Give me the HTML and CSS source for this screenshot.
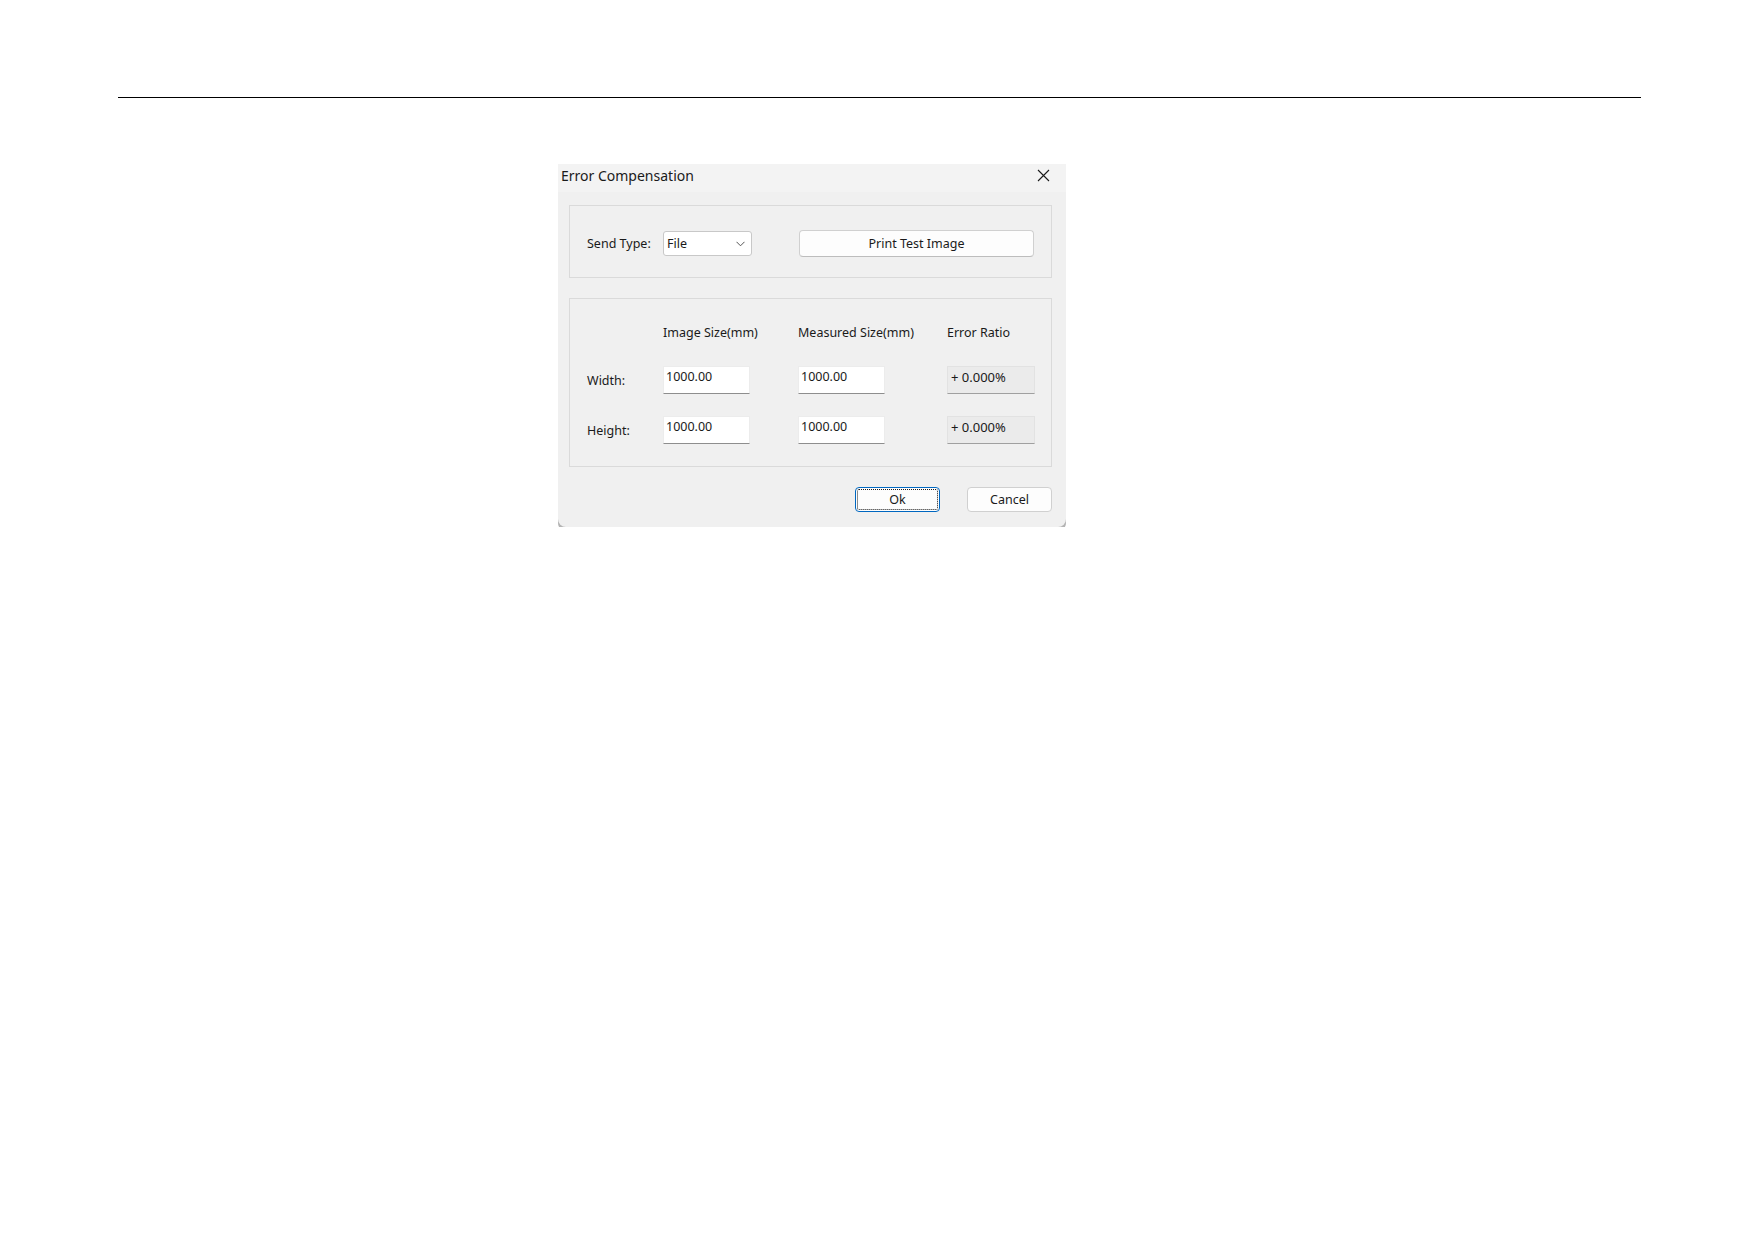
FILE: index.html
```html
<!DOCTYPE html>
<html lang="en">
<head>
    <meta charset="UTF-8">
    <title>Error Compensation</title>
    <link rel="stylesheet" href="styles.css">
</head>
<body>
    <div class="page-rule"></div>

    <div class="dialog">
        <div class="title-bar">
            <span class="title">Error Compensation</span>
            <svg class="close" width="13" height="13" viewBox="0 0 13 13">
                <path d="M1 1 L12 12 M12 1 L1 12" stroke="#1a1a1a" stroke-width="1.1" fill="none"/>
            </svg>
        </div>

        <div class="dialog-body">
            <div class="group send-group">
                <span class="label send-label">Send Type:</span>
                <div class="select">
                    <span>File</span>
                    <svg width="9" height="6" viewBox="0 0 9 6">
                        <path d="M0.5 0.8 L4.5 4.8 L8.5 0.8" stroke="#555" stroke-width="1" fill="none"/>
                    </svg>
                </div>
                <button class="btn print-btn">Print Test Image</button>
            </div>

            <div class="group size-group">
                <span></span>
                <span class="head">Image Size(mm)</span>
                <span class="head">Measured Size(mm)</span>
                <span class="head">Error Ratio</span>

                <span class="label">Width:</span>
                <div class="field">1000.00</div>
                <div class="field">1000.00</div>
                <div class="field readonly">+ 0.000%</div>

                <span class="label">Height:</span>
                <div class="field">1000.00</div>
                <div class="field">1000.00</div>
                <div class="field readonly">+ 0.000%</div>
            </div>

            <div class="actions">
                <button class="btn default">Ok</button>
                <button class="btn">Cancel</button>
            </div>
        </div>
    </div>
</body>
</html>
```

FILE: styles.css
```css
body {
    margin: 0;
    padding: 0;
    background: #fff;
    font-family: "Noto Sans", "Open Sans", Arial, sans-serif;
    color: #1a1a1a;
}

.page-rule {
    margin: 97px 0 0 118px;
    width: 1523px;
    height: 1px;
    background: #000;
}

.dialog {
    width: 508px;
    margin: 66px 0 0 558px;
    background: #f0f0f0;
    border-radius: 0 0 8px 8px;
    box-shadow: 0 4px 0 #b4b4b4;
}

.title-bar {
    height: 28px;
    display: flex;
    align-items: center;
    justify-content: space-between;
    padding: 0 16px 0 3px;
    background: #f3f3f3;
}

.title {
    font-size: 14px;
    margin-top: -5px;
}

.close {
    display: block;
    margin-top: -6px;
}

.dialog-body {
    padding: 13px 14px 15px 11px;
}

.group {
    border: 1px solid #dadada;
    box-sizing: border-box;
}

.send-group {
    height: 73px;
    display: flex;
    align-items: center;
    padding: 4px 17px 0;
}

.label {
    font-size: 12.5px;
}

.send-label {
    width: 76px;
}

.select {
    width: 89px;
    height: 25px;
    box-sizing: border-box;
    background: #fff;
    border: 1px solid #c8c8c8;
    border-radius: 3px;
    display: flex;
    align-items: center;
    justify-content: space-between;
    padding: 0 6px 0 3px;
    font-size: 12.5px;
}

.btn {
    font-family: inherit;
    font-size: 12.5px;
    color: #1a1a1a;
    width: 85px;
    height: 25px;
    background: #fdfdfd;
    border: 1px solid #d0d0d0;
    border-radius: 4px;
    padding: 0;
}

.print-btn {
    width: 235px;
    height: 27px;
    margin-left: auto;
    border-bottom-color: #bdbdbd;
}

.size-group {
    margin-top: 20px;
    display: grid;
    grid-template-columns: 76px 135px 149px 88px;
    grid-template-rows: 20px 28px 28px;
    row-gap: 22px;
    align-items: center;
    padding: 25px 17px 22px;
}

.head {
    font-size: 12.5px;
    align-self: start;
}

.field {
    width: 87px;
    height: 28px;
    box-sizing: border-box;
    background: #fff;
    border: 1px solid #ececec;
    border-bottom-color: #8e8e8e;
    padding: 1px 2px 0;
    font-size: 12.5px;
}

.field.readonly {
    width: 88px;
    background: #ebebeb;
    border-color: #e2e2e2;
    border-bottom-color: #a0a0a0;
    padding-left: 3px;
    font-size: 13px;
}

.actions {
    display: flex;
    justify-content: flex-end;
    gap: 27px;
    margin-top: 20px;
}

.btn.default {
    border-color: #0067c0;
    outline: 1px dotted #1a1a1a;
    outline-offset: -3px;
}
```
